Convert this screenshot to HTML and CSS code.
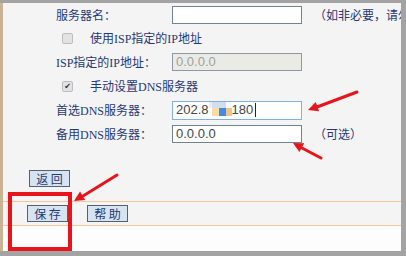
FILE: index.html
```html
<!DOCTYPE html>
<html lang="zh-CN">
<head>
    <meta charset="UTF-8">
    <title>DNS 设置</title>
    <link rel="stylesheet" href="styles.css">
</head>
<body>
    <div class="frame">
        <div class="form">
            <div class="row">
                <span class="label">服务器名：</span>
                <div class="field"></div>
                <span class="note">（如非必要，请勿填写）</span>
            </div>
            <div class="row">
                <span class="check-line"><span class="box"></span>使用ISP指定的IP地址</span>
            </div>
            <div class="row">
                <span class="label">ISP指定的IP地址：</span>
                <div class="field disabled">0.0.0.0</div>
            </div>
            <div class="row">
                <span class="check-line"><span class="box checked">✔</span>手动设置DNS服务器</span>
            </div>
            <div class="row">
                <span class="label">首选DNS服务器：</span>
                <div class="field focus">202.8<span class="blur"><span class="b1"></span><span class="b2"></span><span class="b3"></span><span class="b4"></span></span>180<span class="caret"></span></div>
            </div>
            <div class="row">
                <span class="label">备用DNS服务器：</span>
                <div class="field">0.0.0.0</div>
                <span class="note">（可选）</span>
            </div>
        </div>

        <div class="back-row">
            <button class="btn">返 回</button>
        </div>

        <div class="button-row">
            <button class="btn">保 存</button>
            <button class="btn">帮 助</button>
        </div>
        <div class="blank"></div>
    </div>

    <svg class="marks" width="406" height="256" viewBox="0 0 406 256">
        <g stroke="#e8141c" stroke-width="3" fill="#e8141c" stroke-linecap="round">
            <line x1="357" y1="92" x2="317" y2="107"/>
            <polygon stroke="none" points="308,110 315.7,101.9 319.1,111.2"/>
            <line x1="321" y1="158" x2="302" y2="148"/>
            <polygon stroke="none" points="293,143 304.2,143.3 299.4,152.1"/>
            <line x1="117" y1="175" x2="83" y2="196"/>
            <polygon stroke="none" points="74,201 80,191.5 85.2,200.1"/>
            <rect x="10" y="194" width="60" height="55" fill="none" stroke-width="4"/>
        </g>
    </svg>
</body>
</html>
```

FILE: styles.css
```css
body {
    margin: 0;
    background-color: #a3a3a3;
    font-family: "Liberation Serif", "Noto Sans CJK SC", serif;
    font-size: 12px;
    color: #283874;
    position: relative;
    height: 256px;
    overflow: hidden;
}

.frame {
    margin: 3px 5px 0 0;
    border-left: 3px solid #c8b395;
    width: 398px;
    height: 248px;
    background-color: #f4f4f4;
    display: flex;
    flex-direction: column;
    overflow: hidden;
}

.form {
    display: grid;
    grid-template-rows: 23px repeat(5, 24px);
    padding-left: 53px;
}

.row {
    display: flex;
    align-items: center;
    white-space: nowrap;
}

.label {
    width: 116px;
    flex-shrink: 0;
}

.check-line {
    display: flex;
    align-items: center;
    gap: 17px;
    padding-left: 6px;
}

.box {
    width: 9px;
    height: 9px;
    border: 1px solid #bdbdbd;
    border-radius: 2px;
    background-color: #e2e2e2;
    font-family: "DejaVu Sans", sans-serif;
    font-size: 8px;
    line-height: 9px;
    text-align: center;
    color: #333;
}

.field {
    width: 122px;
    height: 16px;
    flex-shrink: 0;
    padding: 0 3px;
    border: 1px solid #73838f;
    background-color: #fff;
    font-family: "Liberation Sans", Arial, sans-serif;
    font-size: 13px;
    line-height: 16px;
    color: #444;
    display: flex;
    align-items: center;
}

.field.disabled {
    background-color: #ebebe6;
    border-color: #8d9aa3;
    color: #a0a0a0;
}

.field.focus {
    border-color: #7fb0e6;
    height: 17px;
}

.blur {
    display: flex;
    height: 17px;
}

.blur span {
    width: 7px;
}

.blur .b1 {
    width: 3px;
    background: linear-gradient(#e6edf5 35%, #fff 35%);
}

.blur .b2 {
    background: linear-gradient(#d3deec 35%, #fbdca8 35%, #fbdca8 80%, #fff 80%);
}

.blur .b3 {
    background: linear-gradient(#d3deec 35%, #3d8ee0 35%, #3d8ee0 80%, #fff 80%);
}

.blur .b4 {
    width: 6px;
    background: linear-gradient(#fff 35%, #f3c488 35%, #f3c488 80%, #fff 80%);
}

.caret {
    width: 1px;
    height: 14px;
    margin-left: 2px;
    background-color: #222;
}

.note {
    margin-left: 12px;
}

.back-row {
    padding: 24px 0 13px 26px;
}

.btn {
    width: 41px;
    height: 17px;
    padding: 0;
    border: 1px solid #55626e;
    background-color: #d6e4f1;
    font-family: "Noto Sans CJK SC", sans-serif;
    font-size: 12px;
    line-height: 15px;
    color: #283874;
}

.button-row {
    display: flex;
    gap: 19px;
    padding: 3px 0 3px 24px;
    border-top: 1px solid #f5c797;
    border-bottom: 1px solid #f5c797;
}

.blank {
    flex: 1;
    background-color: #fdfdfd;
}

.marks {
    position: absolute;
    top: 0;
    left: 0;
}
```
